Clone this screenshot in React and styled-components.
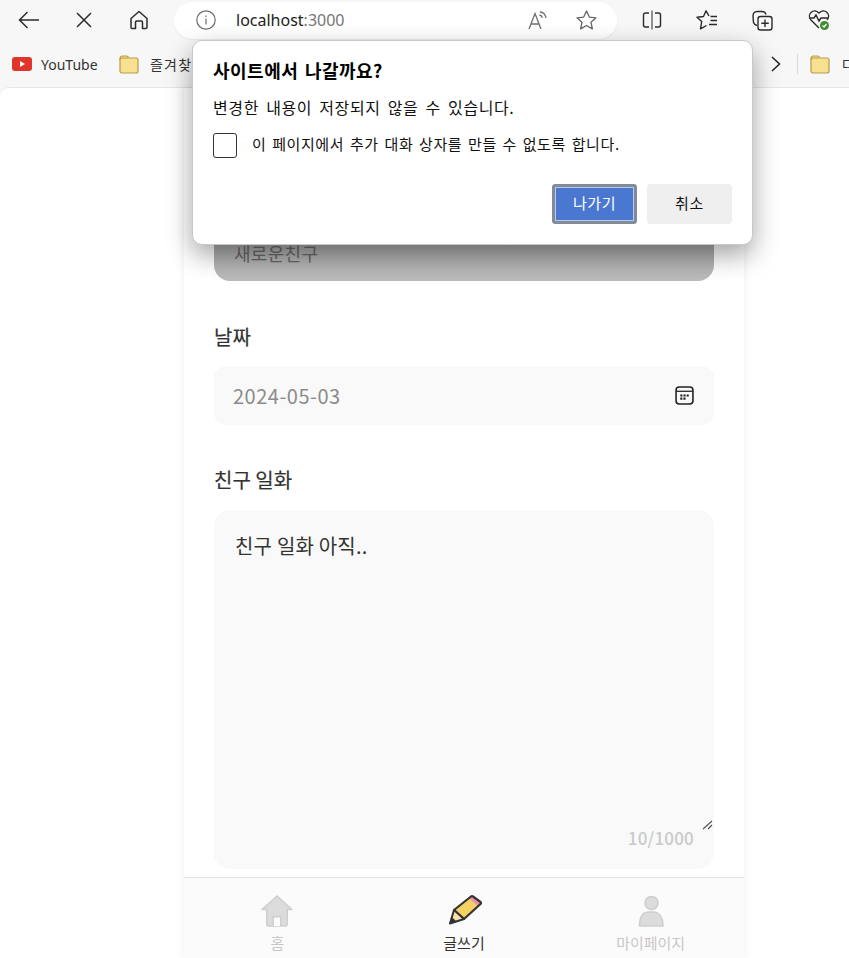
import React from 'react';
import styled, { createGlobalStyle } from 'styled-components';

const PAGE_FONT = `"Noto Sans CJK KR", "Noto Sans", sans-serif`;
const UI_FONT = `"Noto Sans", "Noto Sans CJK KR", "Open Sans", sans-serif`;

const GlobalStyle = createGlobalStyle`
  html, body {
    margin: 0;
    height: 100%;
    overflow: hidden;
    background: #f7f7f7;
  }
  #root { height: 100%; }
  * { box-sizing: border-box; }
`;

const Shell = styled.div`
  position: relative;
  display: flex;
  flex-direction: column;
  height: 958px;
  overflow: hidden;
  font-family: ${PAGE_FONT};
`;

const Toolbar = styled.div`
  display: flex;
  align-items: center;
  height: 42px;
  flex: none;
  padding: 0 0 2px 0;
`;

const ToolButton = styled.div`
  display: flex;
  align-items: center;
  justify-content: center;
  flex: none;
  width: 55px;
  height: 40px;
  color: #2b2b2b;
`;

const LeftTools = styled.div`
  display: flex;
  padding-left: 1px;
  margin-right: 8px;
`;

const AddressBar = styled.div`
  display: flex;
  align-items: center;
  flex: none;
  width: 443px;
  height: 37px;
  padding: 0 20px 0 22px;
  background: #fff;
  border-radius: 19px;
  box-shadow: 0 1px 2px rgba(0, 0, 0, 0.06);
  color: #6d6d6d;
`;

const Url = styled.span`
  flex: 1;
  margin-left: 20px;
  font-family: ${UI_FONT};
  font-size: 16px;
  color: #222;
`;

const Port = styled.span`
  color: #767676;
`;

const AddressIcons = styled.div`
  display: flex;
  align-items: center;
  gap: 28px;
`;

const RightTools = styled.div`
  display: flex;
  margin-left: 7px;
`;

const RightButton = styled(ToolButton)`
  width: 55.6px;
`;

const Bookmarks = styled.div`
  display: flex;
  align-items: center;
  height: 45px;
  flex: none;
  padding: 0 0 1px 12px;
  overflow: hidden;
`;

const Bookmark = styled.div`
  display: flex;
  align-items: center;
  gap: ${props => props.$gap}px;
  flex: none;
  width: ${props => props.$width}px;
  font-family: ${UI_FONT};
  font-size: 14px;
  letter-spacing: ${props => props.$spacing || 0}px;
  color: #333;
  white-space: nowrap;

  svg {
    flex: none;
  }
`;

const Chevron = styled.div`
  display: flex;
  flex: none;
  margin-left: ${props => props.$offset}px;
  color: #222;
`;

const BarDivider = styled.div`
  flex: none;
  width: 1px;
  height: 20px;
  margin: 0 12px 0 16px;
  background: #d8d8d8;
`;

const Viewport = styled.main`
  flex: 1;
  min-height: 0;
  display: flex;
  padding-left: 184px;
  background: #fff;
  border-top: 1px solid #e6e6e6;
  border-top-left-radius: 9px;
`;

const Phone = styled.div`
  display: flex;
  flex-direction: column;
  width: 560px;
  height: 100%;
  background: #fff;
  box-shadow: 0 0 8px rgba(0, 0, 0, 0.07);
`;

const Form = styled.div`
  flex: 1;
  min-height: 0;
  display: flex;
  flex-direction: column;
  padding: 134px 30px 8px;
`;

const DisabledInput = styled.div`
  display: flex;
  align-items: center;
  flex: none;
  height: 59px;
  padding: 3px 20px 0;
  border-radius: 0 0 16px 16px;
  background: linear-gradient(#9d9d9d, #bcbcbc);
  font-size: 18px;
  letter-spacing: 0.3px;
  color: #666;
`;

const Label = styled.div`
  margin: ${props => props.$top}px 0 ${props => props.$bottom}px;
  height: 26px;
  line-height: 26px;
  font-size: 20px;
  font-weight: 400;
  color: #333;
  -webkit-text-stroke: 0.2px #333;
`;

const DateField = styled.div`
  display: flex;
  align-items: center;
  justify-content: space-between;
  flex: none;
  height: 59px;
  padding: 0 20px 0 19px;
  border-radius: 12px;
  background: #f9f9f9;
  font-size: 20px;
  letter-spacing: 0.5px;
  color: #8b8b8b;
`;

const TextBox = styled.div`
  position: relative;
  flex: 1;
  min-height: 0;
  padding: 21px 21px;
  border-radius: 16px;
  background: #f9f9f9;
  font-size: 20px;
  line-height: 30px;
  letter-spacing: 0.2px;
  color: #333;
`;

const Counter = styled.span`
  position: absolute;
  right: 20px;
  bottom: 16px;
  font-size: 17px;
  font-weight: 500;
  letter-spacing: 0.2px;
  color: #c9c9c9;
`;

const Grip = styled.svg`
  position: absolute;
  right: 0;
  bottom: 38px;
`;

const Nav = styled.nav`
  display: grid;
  grid-template-columns: repeat(3, 1fr);
  flex: none;
  height: 81px;
  padding: 17px 0 0 0;
  background: #fbfbfb;
  border-top: 1px solid #e4e4e4;
`;

const NavItem = styled.div`
  display: flex;
  flex-direction: column;
  align-items: center;
  font-size: 15px;
  line-height: 20px;
  color: ${props => (props.$active ? '#333' : '#c8c8c8')};
`;

const NavIconSlot = styled.div`
  display: flex;
  justify-content: center;
  height: 32px;
  margin-bottom: 6px;
`;

const Dialog = styled.section`
  position: absolute;
  left: 192px;
  top: 40px;
  width: 561px;
  height: 205px;
  padding: 17px 20px 20px;
  display: flex;
  flex-direction: column;
  background: #fff;
  border: 1px solid #c9c9c9;
  border-radius: 10px;
  box-shadow: 0 10px 26px rgba(0, 0, 0, 0.36);
  font-family: ${PAGE_FONT};
  color: #111;
`;

const DialogTitle = styled.h2`
  margin: 0;
  font-size: 18px;
  line-height: 24px;
  font-weight: 700;
  letter-spacing: 0.5px;
  word-spacing: 2px;
  color: #000;
`;

const DialogText = styled.p`
  margin: 14px 0 0;
  font-size: 16px;
  line-height: 22px;
  letter-spacing: 0.6px;
  word-spacing: 3px;
`;

const CheckRow = styled.div`
  display: flex;
  align-items: center;
  gap: 15px;
  margin-top: 15px;
`;

const CheckLabel = styled.span`
  padding-bottom: 4px;
  font-size: 15px;
  letter-spacing: 0.6px;
  word-spacing: 1.8px;
`;

const CheckBox = styled.div`
  flex: none;
  width: 24px;
  height: 25px;
  background: #fff;
  border: 1.5px solid #333;
  border-radius: 3px;
`;

const DialogActions = styled.div`
  display: flex;
  justify-content: flex-end;
  gap: 10px;
  margin-top: auto;
`;

const DialogButton = styled.button`
  width: 85px;
  height: 40px;
  padding: 0 0 3px;
  border: none;
  border-radius: 4px;
  font-family: ${PAGE_FONT};
  font-size: 15px;
  letter-spacing: 0.6px;
  background: ${props => (props.$primary ? '#4a78d0' : '#efefef')};
  color: ${props => (props.$primary ? '#fff' : '#111')};
  box-shadow: ${props => (props.$primary ? 'inset 0 0 0 3px #848a96, inset 0 0 0 4px #b5ccf2' : 'none')};
`;

const BackIcon = () => (
  <svg width="22" height="18" viewBox="0 0 22 18" fill="none" stroke="currentColor" strokeWidth="1.5">
    <path d="M21 9H1.5M9.5 1L1.5 9l8 8" />
  </svg>
);

const CloseIcon = () => (
  <svg width="16" height="16" viewBox="0 0 16 16" fill="none" stroke="currentColor" strokeWidth="1.5">
    <path d="M1 1l14 14M15 1L1 15" />
  </svg>
);

const HomeIcon = () => (
  <svg width="20" height="20" viewBox="0 0 20 20" fill="none" stroke="currentColor" strokeWidth="1.5" strokeLinejoin="round">
    <path d="M10 1.5L2 8.5v8.7c0 .8.6 1.3 1.3 1.3h3.2v-6.2c0-.8.6-1.3 1.3-1.3h4.4c.7 0 1.3.5 1.3 1.3v6.2h3.2c.7 0 1.3-.5 1.3-1.3V8.5z" />
  </svg>
);

const InfoIcon = () => (
  <svg width="20" height="20" viewBox="0 0 20 20" fill="none" stroke="currentColor" strokeWidth="1.2">
    <circle cx="10" cy="10" r="9.2" />
    <path d="M10 8.5v6M10 5.5v1.4" />
  </svg>
);

const ReadAloudIcon = () => (
  <svg width="20" height="19" viewBox="0 0 20 19" fill="none" stroke="#6f6f6f" strokeWidth="1.3">
    <path d="M1 18L7 2.5 13 18M3 13h8" />
    <path d="M11.5 4c1.500.2 2.500 1.200 2.800 2.800" />
    <path d="M12 1c3 .3 5.500 2.500 6 6" />
  </svg>
);

const StarIcon = () => (
  <svg width="21" height="20" viewBox="0 0 21 20" fill="none" stroke="#666" strokeWidth="1.3" strokeLinejoin="round">
    <path d="M10.5 1l2.8 6.1 6.7.7-5 4.5 1.4 6.6-5.9-3.4-5.9 3.4 1.4-6.6-5-4.5 6.7-.7z" />
  </svg>
);

const SplitIcon = () => (
  <svg width="20" height="20" viewBox="0 0 20 20" fill="none" stroke="currentColor" strokeWidth="1.4">
    <path d="M7 3H3.5C2.4 3 1.5 3.9 1.5 5v10c0 1.1.9 2 2 2H7M13 3h3.500c1.100 0 2 .9 2 2v10c0 1.100-.9 2-2 2H13" />
    <path d="M10 .5v19" stroke="#666" />
  </svg>
);

const FavoritesIcon = () => (
  <svg width="22" height="20" viewBox="0 0 22 20" fill="none" stroke="currentColor" strokeWidth="1.4" strokeLinejoin="round">
    <path d="M13 6L10 .8 7.500 6.500 1 7.200l4.700 4.300-1.200 7.300 6-3.300" />
    <path d="M14.500 6.500H21M14.500 10.500H21M13 14.500h8" />
  </svg>
);

const CollectionsIcon = () => (
  <svg width="21" height="21" viewBox="0 0 21 21" fill="none" stroke="currentColor" strokeWidth="1.4">
    <path d="M5 15.500C3 15 2 14 1.500 12.500L1 6C1 3.500 2.500 1.500 5 1.500h5c2 0 3.500 1 4 3" />
    <rect x="6" y="6.500" width="14" height="13.500" rx="2.500" />
    <path d="M13 9.500v7.500M9.300 13.200h7.500" />
  </svg>
);

const HealthIcon = () => (
  <svg width="22" height="22" viewBox="0 0 22 22" fill="none">
    <path d="M11 19L3 11C.8 8.600 1 5.400 3 3.400 5.200 1.400 8.500 1.500 11 4c2.500-2.500 5.800-2.600 8-.6 2 2 2.200 5.200 0 7.600" stroke="#2b2b2b" strokeWidth="1.4" />
    <path d="M1 9h5l2-3 3 6 2-3h7" stroke="#2b2b2b" strokeWidth="1.4" />
    <circle cx="16.500" cy="16.500" r="4.500" fill="#3f8a35" />
    <path d="M14.500 16.500l1.500 1.500 2.500-3" stroke="#fff" strokeWidth="1.200" />
  </svg>
);

const YoutubeIcon = () => (
  <svg width="20" height="14" viewBox="0 0 20 14">
    <rect width="20" height="14" rx="3" fill="#e0352b" />
    <path d="M8 4l5 3-5 3z" fill="#fff" />
  </svg>
);

const FolderIcon = () => (
  <svg width="20" height="19" viewBox="0 0 20 19">
    <path d="M1 4c0-1.700 1-3 2.500-3h4C9 1 9.500 3 10.500 3H17c1.200 0 2 .8 2 2v11c0 1.200-.8 2-2 2H3c-1.200 0-2-.8-2-2z" fill="#f7e08f" stroke="#b89b4c" strokeWidth="1.200" />
    <path d="M1 5c0-1 .8-2 2-2h6" fill="none" stroke="#b89b4c" strokeWidth="1.200" />
  </svg>
);

const ChevronIcon = () => (
  <svg width="10" height="16" viewBox="0 0 10 16" fill="none" stroke="currentColor" strokeWidth="1.500">
    <path d="M1 1l7.500 7L1 15" />
  </svg>
);

const CalendarIcon = () => (
  <svg width="19" height="19" viewBox="0 0 18 18" fill="none">
    <rect x="1" y="1" width="16" height="16" rx="3" stroke="#222" strokeWidth="1.500" />
    <path d="M1 5h16" stroke="#222" strokeWidth="1.200" />
    <path d="M5 8h2v2H5zM8 8h2v2H8zM11 8h2v2h-2zM5 11h2v2H5zM8 11h2v2H8z" fill="#222" />
  </svg>
);

const NavHomeIcon = () => (
  <svg width="32" height="32" viewBox="0 0 32 32">
    <path d="M16 1L1 14.500h4.800V29.500c0 1 .6 1.500 1.500 1.500h17.400c.9 0 1.500-.5 1.500-1.500V14.500H31z" fill="#dcdcdc" stroke="#cecece" strokeWidth="1.500" strokeLinejoin="round" />
    <rect x="11.500" y="21" width="9" height="10" fill="#cecece" />
    <rect x="13" y="22.500" width="6" height="8.500" fill="#fbfbfb" />
  </svg>
);

const NavPencilIcon = () => (
  <svg width="36" height="32" viewBox="0 0 36 32">
    <path d="M8 15L25 1.500Q26 .8 27 1.500L34.500 7Q35.500 8 34.500 9L18 24z" fill="#f4d165" />
    <path d="M23 3.200L25 1.500Q26 .8 27 1.500L34.500 7Q35.500 8 34.500 9L32 11.200z" fill="#ea92a8" />
    <path d="M8 15L25 1.500Q26 .8 27 1.500L34.500 7Q35.500 8 34.500 9L18 24z" fill="none" stroke="#333" strokeWidth="2.200" strokeLinejoin="round" />
    <path d="M8 15L18 24 4 28.500z" fill="#f9dfa9" stroke="#333" strokeWidth="2" strokeLinejoin="round" />
    <path d="M4 28.500l1.800-6.500 4.700 4.500z" fill="#333" />
  </svg>
);

const NavUserIcon = () => (
  <svg width="26" height="32" viewBox="0 0 26 32" fill="#dcdcdc" stroke="#cecece" strokeWidth="1.500">
    <circle cx="13.500" cy="8" r="6.500" />
    <path d="M1.500 31C1.500 22 5 17 11 17h4C21 17 25 22 25 31z" strokeLinejoin="round" />
  </svg>
);

const App = () => (
  <Shell>
    <GlobalStyle />
    <Toolbar>
      <LeftTools>
        <ToolButton><BackIcon /></ToolButton>
        <ToolButton><CloseIcon /></ToolButton>
        <ToolButton><HomeIcon /></ToolButton>
      </LeftTools>
      <AddressBar>
        <InfoIcon />
        <Url>localhost<Port>:3000</Port></Url>
        <AddressIcons>
          <ReadAloudIcon />
          <StarIcon />
        </AddressIcons>
      </AddressBar>
      <RightTools>
        <RightButton><SplitIcon /></RightButton>
        <RightButton><FavoritesIcon /></RightButton>
        <RightButton><CollectionsIcon /></RightButton>
        <RightButton><HealthIcon /></RightButton>
      </RightTools>
    </Toolbar>
    <Bookmarks>
      <Bookmark $width={107} $gap={9}><YoutubeIcon />YouTube</Bookmark>
      <Bookmark $width={200} $gap={11} $spacing={1.2}><FolderIcon />즐겨찾기</Bookmark>
      <Chevron $offset={452}><ChevronIcon /></Chevron>
      <BarDivider />
      <Bookmark $width={60} $gap={12}><FolderIcon />다른 즐겨찾기</Bookmark>
    </Bookmarks>
    <Viewport>
      <Phone>
        <Form>
          <DisabledInput>새로운친구</DisabledInput>
          <Label $top={43} $bottom={16}>날짜</Label>
          <DateField>
            2024-05-03
            <CalendarIcon />
          </DateField>
          <Label $top={42} $bottom={17}>친구 일화</Label>
          <TextBox>
            친구 일화 아직..
            <Grip width="12" height="12" viewBox="0 0 12 12" stroke="#555" strokeWidth="1.200">
              <path d="M1 10l9-8M6 10l4-4" />
            </Grip>
            <Counter>10/1000</Counter>
          </TextBox>
        </Form>
        <Nav>
          <NavItem><NavIconSlot><NavHomeIcon /></NavIconSlot>홈</NavItem>
          <NavItem $active><NavIconSlot><NavPencilIcon /></NavIconSlot>글쓰기</NavItem>
          <NavItem><NavIconSlot><NavUserIcon /></NavIconSlot>마이페이지</NavItem>
        </Nav>
      </Phone>
    </Viewport>
    <Dialog>
      <DialogTitle>사이트에서 나갈까요?</DialogTitle>
      <DialogText>변경한 내용이 저장되지 않을 수 있습니다.</DialogText>
      <CheckRow>
        <CheckBox />
        <CheckLabel>이 페이지에서 추가 대화 상자를 만들 수 없도록 합니다.</CheckLabel>
      </CheckRow>
      <DialogActions>
        <DialogButton $primary>나가기</DialogButton>
        <DialogButton>취소</DialogButton>
      </DialogActions>
    </Dialog>
  </Shell>
);

export default App;
